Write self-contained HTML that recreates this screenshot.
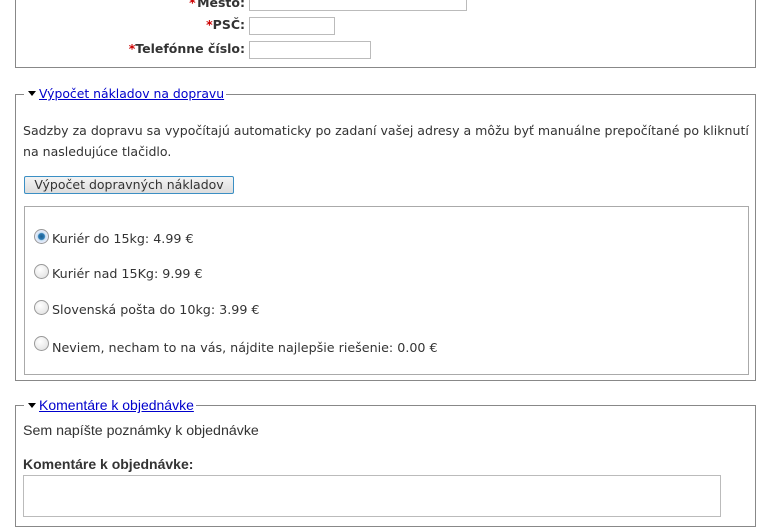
<!DOCTYPE html>
<html><head><meta charset="utf-8"><style>
body{margin:0;width:769px;height:504px;overflow:hidden;background:#fff;font-family:"DejaVu Sans",Verdana,sans-serif;font-size:12.7px;color:#333;position:relative}
.a{position:absolute;white-space:nowrap}
.box{position:absolute;border:1px solid #888}
.in{position:absolute;border:1px solid #bbb;background:#fff}
.lbl{position:absolute;right:524px;font-weight:bold;font-size:12.5px;color:#333;white-space:nowrap}
.lbl b{color:#c00}
.leg{position:absolute;background:#fff;padding:0 2px 0 4px;white-space:nowrap}
.leg a{color:#00c;text-decoration:underline}
.tri{display:inline-block;width:0;height:0;border-left:4px solid transparent;border-right:4px solid transparent;border-top:5px solid #000;margin-right:3px;vertical-align:2px}
.rad{position:absolute;width:13px;height:13px;border-radius:50%;border:1px solid #999;background:radial-gradient(circle at 40% 35%,#fff,#ddd)}
.rad.on{background:radial-gradient(circle at 50% 50%,#1d5f8f 0,#2b7ab5 3px,#cfe3f2 4px,#eef 7px)}
</style></head><body>
<div class="box" style="left:15px;top:-5px;width:739px;height:72px;border-top:none"></div>
<div class="lbl" style="top:-5px">Mesto:<b style="position:absolute;left:-8px">*</b></div>
<div class="in" style="left:249px;top:-8px;width:216px;height:17px"></div>
<div class="lbl" style="top:17px"><b>*</b>PSČ:</div>
<div class="in" style="left:249px;top:17px;width:84px;height:16px"></div>
<div class="lbl" style="top:41px"><b>*</b>Telefónne číslo:</div>
<div class="in" style="left:249px;top:41px;width:120px;height:16px"></div>

<div class="box" style="left:15px;top:94px;width:739px;height:285px"></div>
<div class="leg" style="left:24px;top:86px;font-size:12.4px"><span class="tri"></span><a>Výpočet nákladov na dopravu</a></div>
<div class="a" style="left:23px;top:123px;font-size:12.55px">Sadzby za dopravu sa vypočítajú automaticky po zadaní vašej adresy a môžu byť manuálne prepočítané po kliknutí</div>
<div class="a" style="left:23px;top:144px;font-size:12.55px">na nasledujúce tlačidlo.</div>
<div class="a" style="left:24px;top:176px;width:208px;height:16px;border:1px solid #3b8fc4;border-radius:2px;background:linear-gradient(#f4f4f4,#ddd);text-align:center;font-size:12.5px;line-height:16px">Výpočet dopravných nákladov</div>

<div class="box" style="left:24px;top:206px;width:723px;height:167px;border-color:#aaa"></div>
<div class="rad on" style="left:34px;top:229px"></div><div class="a" style="left:52px;top:231px">Kuriér do 15kg: 4.99 €</div>
<div class="rad" style="left:34px;top:264px"></div><div class="a" style="left:52px;top:266px">Kuriér nad 15Kg: 9.99 €</div>
<div class="rad" style="left:34px;top:300px"></div><div class="a" style="left:52px;top:302px">Slovenská pošta do 10kg: 3.99 €</div>
<div class="rad" style="left:34px;top:336px"></div><div class="a" style="left:52px;top:340px">Neviem, necham to na vás, nájdite najlepšie riešenie: 0.00 €</div>

<div class="box" style="left:15px;top:405px;width:739px;height:120px"></div>
<div class="leg" style="left:24px;top:397px;font-family:'Liberation Sans',sans-serif;font-size:14px"><span class="tri"></span><a>Komentáre k objednávke</a></div>
<div class="a" style="left:23px;top:423px;font-family:'Liberation Sans',sans-serif;font-size:14.2px">Sem napíšte poznámky k objednávke</div>
<div class="a" style="left:23px;top:456px;font-family:'Liberation Sans',sans-serif;font-size:14px;font-weight:bold">Komentáre k objednávke:</div>
<div class="in" style="left:23px;top:475px;width:696px;height:40px"></div>
</body></html>
